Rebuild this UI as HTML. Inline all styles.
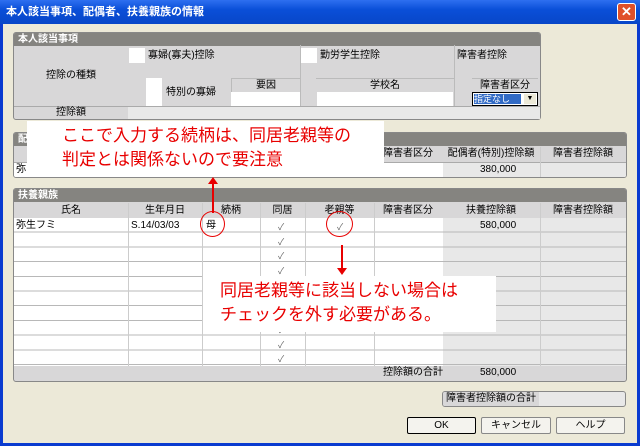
<!DOCTYPE html><html><head><meta charset="utf-8"><style>
*{margin:0;padding:0;box-sizing:border-box}
body{width:640px;height:446px;overflow:hidden;background:#0a3bd0;font-family:"Liberation Sans","Noto Sans CJK JP",sans-serif;font-size:10px;line-height:12px;color:#000;position:relative}
.a{position:absolute}
.t{display:flex;align-items:center;justify-content:center;white-space:nowrap}
.hd{background:#858480;color:#fff;font-weight:bold;padding-left:4px;line-height:13px;font-size:10px}
.w{background:#fff}
.r{color:#e80000;font-size:17px;line-height:24px;white-space:nowrap}
.btn{background:#f4f3ee;border:1px solid #888;border-radius:2px}
.ck{color:#666;font-size:9px}
</style></head><body>
<div class="a" style="left:0;top:0;width:640px;height:24px;background:linear-gradient(#2e6ff0,#0a4fd8 40%,#0846c8)"></div>
<div class="a" style="left:6px;top:6px;color:#fff;font-weight:bold;font-size:11px">本人該当事項、配偶者、扶養親族の情報</div>
<div class="a t" style="left:617px;top:3px;width:19px;height:18px;background:#e0502a;border:1px solid #fff;border-radius:3px;color:#fff;font-weight:bold;font-size:13px">✕</div>
<div class="a" style="left:3px;top:24px;width:634px;height:419px;background:#ece9d8"></div>

<div class="a" style="left:13px;top:32px;width:528px;height:88px;background:#d8d7d8;border:1px solid #888;border-radius:3px;overflow:hidden">
 <div class="hd">本人該当事項</div>
</div>
<div class="a t" style="left:14px;top:46px;width:114px;height:60px">控除の種類</div>
<div class="a w" style="left:129px;top:48px;width:16px;height:15px"></div>
<div class="a" style="left:148px;top:50px">寡婦(寡夫)控除</div>
<div class="a" style="left:300px;top:45px;width:1px;height:74px;background:#bbb"></div>
<div class="a w" style="left:301px;top:48px;width:16px;height:15px"></div>
<div class="a" style="left:320px;top:50px">勤労学生控除</div>
<div class="a" style="left:454px;top:45px;width:1px;height:74px;background:#bbb"></div>
<div class="a" style="left:457px;top:50px">障害者控除</div>
<div class="a w" style="left:146px;top:78px;width:16px;height:28px"></div>
<div class="a" style="left:166px;top:87px">特別の寡婦</div>
<div class="a t" style="left:231px;top:78px;width:69px;height:14px;border-left:1px solid #bbb;border-top:1px solid #bbb">要因</div>
<div class="a w" style="left:231px;top:92px;width:69px;height:14px"></div>
<div class="a t" style="left:316px;top:78px;width:138px;height:14px;border-top:1px solid #bbb">学校名</div>
<div class="a w" style="left:317px;top:92px;width:136px;height:14px"></div>
<div class="a t" style="left:472px;top:78px;width:66px;height:14px;border-top:1px solid #bbb">障害者区分</div>
<div class="a" style="left:472px;top:92px;width:66px;height:14px;background:#fff;border:1px solid #000"><div style="position:absolute;left:1px;top:1px;width:47px;height:10px;background:#316ac5;color:#fff;font-size:9px;line-height:10px">指定なし</div><div style="position:absolute;right:1px;top:1px;width:12px;height:10px;background:#ece9d8;font-size:7px;text-align:center;line-height:10px">▼</div></div>
<div class="a" style="left:14px;top:106px;width:526px;height:1px;background:#aaa"></div>
<div class="a t" style="left:14px;top:107px;width:114px;height:12px">控除額</div>
<div class="a" style="left:128px;top:107px;width:412px;height:12px;background:#e8e8e8"></div>

<div class="a" style="left:13px;top:132px;width:614px;height:46px;background:#d8d7d8;border:1px solid #888;border-radius:3px;overflow:hidden">
 <div class="hd">配偶者</div>
 <div style="position:absolute;left:0;top:29px;width:612px;height:15px;background:#fff;border-top:1px solid #aaa"></div>
 <div style="position:absolute;left:429px;top:30px;width:184px;height:14px;background:#e8e8e8"></div>
 <div style="position:absolute;left:360px;top:14px;width:1px;height:30px;background:#ccc"></div>
 <div style="position:absolute;left:526px;top:14px;width:1px;height:30px;background:#ccc"></div>
</div>
<div class="a t" style="left:374px;top:147px;width:68px;height:14px">障害者区分</div>
<div class="a t" style="left:442px;top:147px;width:98px;height:14px">配偶者(特別)控除額</div>
<div class="a t" style="left:540px;top:147px;width:86px;height:14px">障害者控除額</div>
<div class="a" style="left:480px;top:164px">380,000</div>
<div class="a" style="left:16px;top:164px">弥</div>

<div class="a" style="left:13px;top:188px;width:614px;height:194px;background:#d8d7d8;border:1px solid #888;border-radius:3px;overflow:hidden">
 <div class="hd">扶養親族</div>
 <div style="position:absolute;left:0;top:29px;width:612px;height:148px;background:#fff;background-image:repeating-linear-gradient(#fff 0,#fff 13.7px,#b8b8b8 13.7px,#b8b8b8 14.7px)"></div>
 <div style="position:absolute;left:429px;top:29px;width:184px;height:148px;background-image:repeating-linear-gradient(#e8e8e8 0,#e8e8e8 13.7px,#b8b8b8 13.7px,#b8b8b8 14.7px)"></div>
 <div style="position:absolute;left:114px;top:14px;width:1px;height:163px;background:#ccc"></div>
 <div style="position:absolute;left:188px;top:14px;width:1px;height:163px;background:#ccc"></div>
 <div style="position:absolute;left:246px;top:14px;width:1px;height:163px;background:#ccc"></div>
 <div style="position:absolute;left:291px;top:14px;width:1px;height:163px;background:#ccc"></div>
 <div style="position:absolute;left:360px;top:14px;width:1px;height:163px;background:#ccc"></div>
 <div style="position:absolute;left:526px;top:14px;width:1px;height:163px;background:#ccc"></div>
</div>
<div class="a t" style="left:14px;top:203px;width:114px;height:15px">氏名</div>
<div class="a t" style="left:128px;top:203px;width:74px;height:15px">生年月日</div>
<div class="a t" style="left:202px;top:203px;width:58px;height:15px">続柄</div>
<div class="a t" style="left:260px;top:203px;width:45px;height:15px">同居</div>
<div class="a t" style="left:305px;top:203px;width:69px;height:15px">老親等</div>
<div class="a t" style="left:374px;top:203px;width:68px;height:15px">障害者区分</div>
<div class="a t" style="left:442px;top:203px;width:98px;height:15px">扶養控除額</div>
<div class="a t" style="left:540px;top:203px;width:86px;height:15px">障害者控除額</div>
<div class="a" style="left:16px;top:220px">弥生フミ</div>
<div class="a" style="left:131px;top:220px">S.14/03/03</div>
<div class="a" style="left:206px;top:220px">母</div>
<div class="a" style="left:480px;top:220px">580,000</div>
<div class="a ck" style="left:278px;top:220px;line-height:14.7px">✓<br>✓<br>✓<br>✓<br>✓<br>✓<br>✓<br>✓<br>✓<br>✓</div>
<div class="a ck" style="left:337px;top:220px;line-height:14.7px">✓</div>
<div class="a" style="left:383px;top:367px">控除額の合計</div>
<div class="a" style="left:480px;top:367px">580,000</div>

<div class="a" style="left:442px;top:391px;width:184px;height:16px;border:1px solid #888;border-radius:3px;background:#e8e8e8;overflow:hidden"><div style="width:96px;height:14px;background:#d8d7d8;padding:1px 3px">障害者控除額の合計</div></div>
<div class="a t btn" style="left:407px;top:417px;width:69px;height:17px;border:1px solid #000">OK</div>
<div class="a t btn" style="left:481px;top:417px;width:70px;height:17px">キャンセル</div>
<div class="a t btn" style="left:556px;top:417px;width:69px;height:17px">ヘルプ</div>

<div class="a w" style="left:27px;top:121px;width:357px;height:56px"></div>
<div class="a r" style="left:62px;top:124px">ここで入力する続柄は、同居老親等の<br>判定とは関係ないので要注意</div>
<div class="a" style="left:212px;top:182px;width:2px;height:31px;background:#e80000"></div>
<div class="a" style="left:208px;top:177px;width:0;height:0;border-left:5px solid transparent;border-right:5px solid transparent;border-bottom:7px solid #e80000"></div>
<div class="a" style="left:200px;top:211px;width:25px;height:26px;border:1px solid #e80000;border-radius:50%"></div>
<div class="a" style="left:326px;top:211px;width:27px;height:26px;border:1px solid #e80000;border-radius:50%"></div>
<div class="a" style="left:341px;top:245px;width:2px;height:25px;background:#e80000"></div>
<div class="a" style="left:337px;top:268px;width:0;height:0;border-left:5px solid transparent;border-right:5px solid transparent;border-top:7px solid #e80000"></div>
<div class="a w" style="left:203px;top:276px;width:293px;height:56px"></div>
<div class="a r" style="left:220px;top:279px">同居老親等に該当しない場合は<br>チェックを外す必要がある。</div>
</body></html>
